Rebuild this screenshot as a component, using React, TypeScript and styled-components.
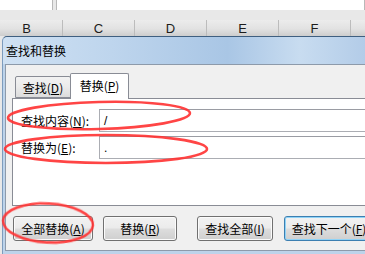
import styled, { createGlobalStyle } from "styled-components";

const Global = createGlobalStyle`
  html, body { margin: 0; padding: 0; overflow: hidden; }
  body { font-family: "Noto Sans CJK SC", "Noto Sans", sans-serif; }
`;

const Page = styled.div`
  position: relative;
  width: 365px;
  height: 254px;
  overflow: hidden;
  background: #e8e8e8;
  display: flex;
  flex-direction: column;
`;

const FormulaStrip = styled.div`
  height: 10px;
  display: flex;
  gap: 3px;
`;

const FieldBox = styled.div<{ $w?: number }>`
  background: #fff;
  border-right: 1px solid #b8b8b8;
  border-left: ${(p) => (p.$w ? "none" : "1px solid #b8b8b8")};
  width: ${(p) => (p.$w ? `${p.$w}px` : "auto")};
  flex: ${(p) => (p.$w ? "none" : 1)};
`;

const Spacer = styled.div`
  height: 10px;
`;

const HeaderRow = styled.div`
  height: 16px;
  display: flex;
  margin-left: -9px;
  background: linear-gradient(180deg, #ececec 0%, #e2e2e2 55%, #cdcdcd 100%);
`;

const ColHead = styled.div`
  width: 71px;
  flex: none;
  border-right: 1px solid #bcbcbc;
  display: flex;
  align-items: flex-end;
  justify-content: center;
  font-family: "Liberation Sans", Arial, sans-serif;
  font-size: 13px;
  line-height: 14px;
  color: #1c1c1c;
`;

const Dialog = styled.div`
  flex: 1;
  margin-left: 2px;
  border-top: 1px solid #3f5f80;
  border-left: 1px solid #7d9cbd;
  border-radius: 5px 0 0 0;
  background: #bdd3ea;
  display: flex;
  flex-direction: column;
`;

const TitleBar = styled.div`
  height: 27px;
  display: flex;
  align-items: center;
  padding-left: 3px;
  font-size: 12px;
  color: #000;
  border-radius: 5px 0 0 0;
  background: linear-gradient(90deg, #cfe1f3 0%, #bed5ed 30%, #a9c6e5 62%, #c8dcf0 82%, #b3cce8 100%);
`;

const Body = styled.div`
  height: 185px;
  margin-left: 2px;
  border: 1px solid #8d9aaa;
  border-right: none;
  background: #f0f0f0;
  display: flex;
  flex-direction: column;
  padding-top: 8px;
  box-sizing: content-box;
  height: 177px;
`;

const TabStrip = styled.div`
  display: flex;
  align-items: flex-end;
  height: 25px;
  margin-left: 9px;
`;

const Tab = styled.div<{ $active?: boolean }>`
  position: relative;
  z-index: ${(p) => (p.$active ? 2 : 1)};
  box-sizing: border-box;
  width: ${(p) => (p.$active ? 59 : 56)}px;
  height: ${(p) => (p.$active ? 26 : 22)}px;
  margin-left: ${(p) => (p.$active ? -1 : 0)}px;
  margin-bottom: ${(p) => (p.$active ? -1 : 0)}px;
  border: 1px solid #898c95;
  border-bottom: ${(p) => (p.$active ? "none" : "1px solid #898c95")};
  border-radius: 2px 2px 0 0;
  background: ${(p) =>
    p.$active ? "#ffffff" : "linear-gradient(180deg, #f2f2f2 0%, #ebebeb 50%, #dcdcdc 100%)"};
  display: flex;
  align-items: center;
  justify-content: center;
  font-size: 12px;
  color: #000;
  padding-bottom: ${(p) => (p.$active ? 2 : 0)}px;
`;

const Panel = styled.div`
  margin-left: 6px;
  height: 106px;
  border: 1px solid #898c95;
  border-right: none;
  background: #fff;
  padding: 10px 0 0 8px;
  box-sizing: content-box;
  height: 96px;
  display: grid;
  grid-template-columns: 78px 1fr;
  grid-auto-rows: 23px;
  row-gap: 4px;
  align-content: start;
`;

const Label = styled.div`
  display: flex;
  align-items: center;
  font-size: 12px;
  color: #000;
`;

const Field = styled.div`
  box-sizing: border-box;
  border: 1px solid #abadb3;
  border-top-color: #9a9ca3;
  border-right: none;
  background: #fff;
  display: flex;
  align-items: center;
  padding-left: 4px;
  font-family: "Liberation Sans", Arial, sans-serif;
  font-size: 12px;
  color: #000;
`;

const ButtonRow = styled.div`
  display: flex;
  margin: 10px 0 0 7px;
`;

const Button = styled.div<{ $w: number; $gap: number; $focus?: boolean }>`
  box-sizing: border-box;
  flex: none;
  width: ${(p) => p.$w}px;
  height: 25px;
  margin-left: ${(p) => p.$gap}px;
  border: 1px solid ${(p) => (p.$focus ? "#3c7fb1" : "#707070")};
  border-radius: 3px;
  box-shadow: ${(p) => (p.$focus ? "inset 0 0 0 1px #8fd3f7" : "inset 0 0 0 1px #fbfbfb")};
  background: linear-gradient(180deg, #f2f2f2 0%, #ebebeb 48%, #dddddd 52%, #cfcfcf 100%);
  display: flex;
  align-items: center;
  justify-content: center;
  font-size: 12px;
  color: #000;
  white-space: nowrap;
`;

const Key = styled.span`
  text-decoration: underline;
  text-underline-offset: 1px;
`;

const Marks = styled.svg`
  position: absolute;
  left: 0;
  top: 0;
  pointer-events: none;
  z-index: 5;
`;

const cols = ["B", "C", "D", "E", "F", "G"];

export default function App() {
  return (
    <Page>
      <Global />
      <FormulaStrip>
        <FieldBox $w={52} />
        <FieldBox />
      </FormulaStrip>
      <Spacer />
      <HeaderRow>
        {cols.map((c) => (
          <ColHead key={c}>{c === "G" ? "" : c}</ColHead>
        ))}
      </HeaderRow>
      <Dialog>
        <TitleBar>查找和替换</TitleBar>
        <Body>
          <TabStrip>
            <Tab>
              查找(<Key>D</Key>)
            </Tab>
            <Tab $active>
              替换(<Key>P</Key>)
            </Tab>
          </TabStrip>
          <Panel>
            <Label>
              查找内容(<Key>N</Key>):
            </Label>
            <Field>/</Field>
            <Label>
              替换为(<Key>E</Key>):
            </Label>
            <Field>.</Field>
          </Panel>
          <ButtonRow>
            <Button $w={80} $gap={0}>
              全部替换(<Key>A</Key>)
            </Button>
            <Button $w={74} $gap={10}>
              替换(<Key>R</Key>)
            </Button>
            <Button $w={76} $gap={20}>
              查找全部(<Key>I</Key>)
            </Button>
            <Button $w={90} $gap={11} $focus>
              查找下一个(<Key>F</Key>)
            </Button>
          </ButtonRow>
        </Body>
      </Dialog>
      <Marks width="365" height="254" viewBox="0 0 365 254">
        <g fill="none" stroke="#ff3030" strokeWidth="2.6" opacity="0.9">
          <ellipse cx="99" cy="115.5" rx="91" ry="13.5" transform="rotate(-1.5 99 115.5)" />
          <ellipse cx="106" cy="149" rx="101" ry="14" />
          <ellipse cx="48" cy="223" rx="45" ry="19.5" transform="rotate(3 48 223)" />
        </g>
      </Marks>
    </Page>
  );
}
